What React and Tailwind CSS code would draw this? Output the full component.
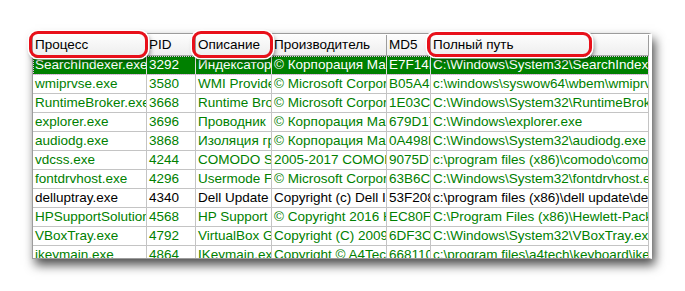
const cols = [
  { title: 'Процесс', w: 'w-[114px]' },
  { title: 'PID', w: 'w-[49px]' },
  { title: 'Описание', w: 'w-[76px]' },
  { title: 'Производитель', w: 'w-[115px]' },
  { title: 'MD5', w: 'w-[44px]' },
  { title: 'Полный путь', w: 'w-[218px]' },
];

const rows = [
  ['SearchIndexer.exe', '3292', 'Индексатор Microsoft Windows Search', '© Корпорация Майкрософт', 'E7F14B0A', 'C:\\Windows\\System32\\SearchIndexer.exe'],
  ['wmiprvse.exe', '3580', 'WMI Provider Host', '© Microsoft Corporation', 'B05A4C22', 'c:\\windows\\syswow64\\wbem\\wmiprvse.exe'],
  ['RuntimeBroker.exe', '3668', 'Runtime Broker', '© Microsoft Corporation', '1E03C9A1', 'C:\\Windows\\System32\\RuntimeBroker.exe'],
  ['explorer.exe', '3696', 'Проводник', '© Корпорация Майкрософт', '679D17E2', 'C:\\Windows\\explorer.exe'],
  ['audiodg.exe', '3868', 'Изоляция графов аудиоустройств', '© Корпорация Майкрософт', '0A498B3F', 'C:\\Windows\\System32\\audiodg.exe'],
  ['vdcss.exe', '4244', 'COMODO Sandbox', '2005-2017 COMODO', '9075D7C4', 'c:\\program files (x86)\\comodo\\comodo internet security\\vdcss.exe'],
  ['fontdrvhost.exe', '4296', 'Usermode Font Driver Host', '© Microsoft Corporation', '63B6C0D8', 'C:\\Windows\\System32\\fontdrvhost.exe'],
  ['delluptray.exe', '4340', 'Dell Update', 'Copyright (c) Dell Inc', '53F208A9', 'c:\\program files (x86)\\dell update\\delluptray.exe', true],
  ['HPSupportSolutionsFramework', '4568', 'HP Support Solutions', '© Copyright 2016 HP', 'EC80F5B1', 'C:\\Program Files (x86)\\Hewlett-Packard\\HP Support'],
  ['VBoxTray.exe', '4792', 'VirtualBox Guest Additions', 'Copyright (C) 2009-2017', '6DF3C7E0', 'C:\\Windows\\System32\\VBoxTray.exe'],
  ['ikeymain.exe', '4864', 'IKeymain.exe', 'Copyright © A4Tech', '668110F3', 'c:\\program files\\a4tech\\keyboard\\ikeymain.exe'],
];

function Mark({ className }) {
  return (
    <div
      className={`absolute rounded-[9px] border-[3px] border-[#e8101a] shadow-[0_0_0_1.5px_#fff,2px_3px_5px_rgba(0,0,0,0.45)] ${className}`}
    />
  );
}

export default function App() {
  return (
    <div className="relative w-[685px] h-[291px] bg-white overflow-hidden font-['Liberation_Sans',Arial,sans-serif] text-[13.5px] leading-none">
      <div className="pt-[33px] pl-[32px]">
        <div className="w-[620px] h-[226px] bg-white border border-[#9c9c9c] border-r-[3px] border-r-white overflow-hidden shadow-[3px_6px_10px_rgba(0,0,0,0.7)]">
          {/* header */}
          <div className="flex h-[21px] mt-[1px] bg-gradient-to-b from-[#fdfdfd] to-[#eeeeee] border-b border-[#a8a8a8]">
            {cols.map(c => (
              <div key={c.title} className={`${c.w} shrink-0 flex items-center px-[2px] border-r border-[#9d9d9d] overflow-hidden whitespace-nowrap text-black`}>
                {c.title}
              </div>
            ))}
          </div>

          {/* rows */}
          {rows.map((r, i) => {
            const sel = i === 0;
            const black = r[6];
            return (
              <div
                key={r[0]}
                className={`flex h-[19px] border-b border-[#c4c4c4] ${sel ? 'bg-[#008000] text-white outline-1 outline-dotted outline-[#e9b7e9] -outline-offset-1' : black ? 'text-black' : 'text-[#008000]'}`}
              >
                {cols.map((c, j) => (
                  <div
                    key={c.title}
                    className={`${c.w} shrink-0 flex items-center pl-[2px] border-r ${sel ? 'border-[#e0e0e0]' : 'border-[#c4c4c4]'} overflow-hidden whitespace-nowrap`}
                  >
                    {r[j]}
                  </div>
                ))}
              </div>
            );
          })}
        </div>
      </div>

      <Mark className="left-[29px] top-[31px] w-[119px] h-[27px]" />
      <Mark className="left-[192px] top-[31px] w-[81px] h-[27px]" />
      <Mark className="left-[427px] top-[32px] w-[165px] h-[25px]" />
    </div>
  );
}
